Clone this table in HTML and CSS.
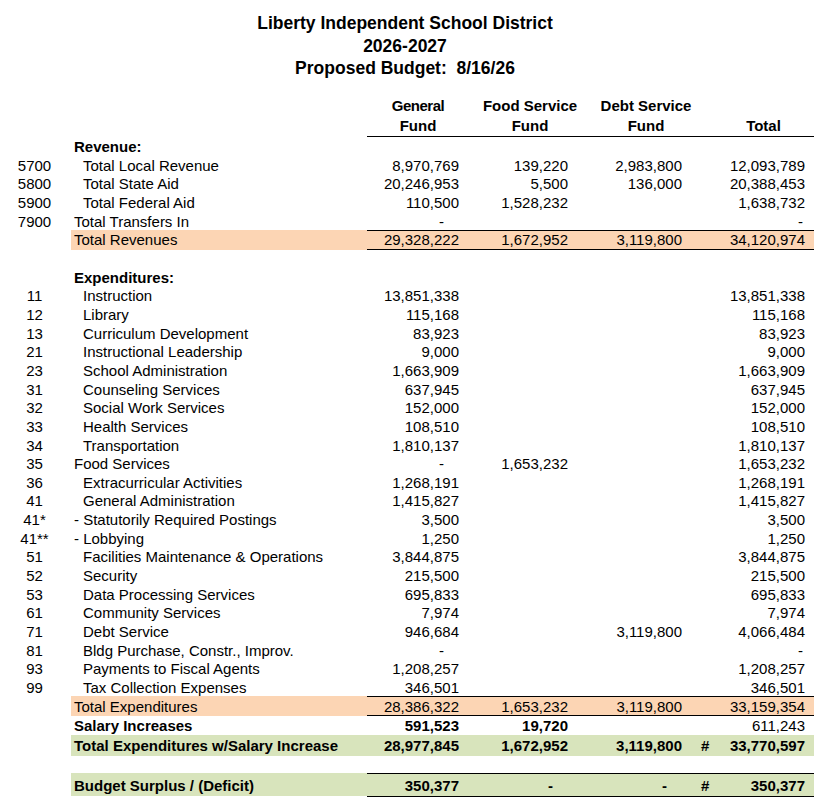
FILE: index.html
```html
<!DOCTYPE html>
<html lang="en">
<head>
<meta charset="utf-8">
<title>Liberty ISD Proposed Budget</title>
<link rel="stylesheet" href="styles.css">
</head>
<body>
<div class="page">
  <div class="title">
    <div>Liberty Independent School District</div>
    <div>2026-2027</div>
    <div>Proposed Budget:&nbsp; 8/16/26</div>
  </div>

  <div class="head">
    <div></div>
    <div></div>
    <div class="hc hc-gen"><span class="tight">General</span><span>Fund</span></div>
    <div class="hc hc-food"><span>Food Service</span><span>Fund</span></div>
    <div class="hc hc-debt"><span>Debt Service</span><span>Fund</span></div>
    <div class="hc"></div>
    <div class="hc hc-tot"><span>&nbsp;</span><span>Total</span></div>
  </div>

  <div class="row"><div class="code"></div><div class="lbl b">Revenue:</div><div></div><div></div><div></div><div></div><div></div></div>
  <div class="row"><div class="code">5700</div><div class="lbl ind">Total Local Revenue</div><div class="n">8,970,769</div><div class="n">139,220</div><div class="n">2,983,800</div><div class="h"></div><div class="t">12,093,789</div></div>
  <div class="row"><div class="code">5800</div><div class="lbl ind">Total State Aid</div><div class="n">20,246,953</div><div class="n">5,500</div><div class="n">136,000</div><div class="h"></div><div class="t">20,388,453</div></div>
  <div class="row"><div class="code">5900</div><div class="lbl ind">Total Federal Aid</div><div class="n">110,500</div><div class="n">1,528,232</div><div class="n"></div><div class="h"></div><div class="t">1,638,732</div></div>
  <div class="row"><div class="code">7900</div><div class="lbl">Total Transfers In</div><div class="n dash">-</div><div class="n"></div><div class="n"></div><div class="h"></div><div class="t dash">-</div></div>
  <div class="row tot peach"><div class="code"></div><div class="lbl">Total Revenues</div><div class="n">29,328,222</div><div class="n">1,672,952</div><div class="n">3,119,800</div><div class="h"></div><div class="t">34,120,974</div></div>
  <div class="row"><div class="code"></div><div class="lbl"></div><div></div><div></div><div></div><div></div><div></div></div>

  <div class="row"><div class="code"></div><div class="lbl b">Expenditures:</div><div></div><div></div><div></div><div></div><div></div></div>
  <div class="row"><div class="code">11</div><div class="lbl ind">Instruction</div><div class="n">13,851,338</div><div class="n"></div><div class="n"></div><div class="h"></div><div class="t">13,851,338</div></div>
  <div class="row"><div class="code">12</div><div class="lbl ind">Library</div><div class="n">115,168</div><div class="n"></div><div class="n"></div><div class="h"></div><div class="t">115,168</div></div>
  <div class="row"><div class="code">13</div><div class="lbl ind">Curriculum Development</div><div class="n">83,923</div><div class="n"></div><div class="n"></div><div class="h"></div><div class="t">83,923</div></div>
  <div class="row"><div class="code">21</div><div class="lbl ind">Instructional Leadership</div><div class="n">9,000</div><div class="n"></div><div class="n"></div><div class="h"></div><div class="t">9,000</div></div>
  <div class="row"><div class="code">23</div><div class="lbl ind">School Administration</div><div class="n">1,663,909</div><div class="n"></div><div class="n"></div><div class="h"></div><div class="t">1,663,909</div></div>
  <div class="row"><div class="code">31</div><div class="lbl ind">Counseling Services</div><div class="n">637,945</div><div class="n"></div><div class="n"></div><div class="h"></div><div class="t">637,945</div></div>
  <div class="row"><div class="code">32</div><div class="lbl ind">Social Work Services</div><div class="n">152,000</div><div class="n"></div><div class="n"></div><div class="h"></div><div class="t">152,000</div></div>
  <div class="row"><div class="code">33</div><div class="lbl ind">Health Services</div><div class="n">108,510</div><div class="n"></div><div class="n"></div><div class="h"></div><div class="t">108,510</div></div>
  <div class="row"><div class="code">34</div><div class="lbl ind">Transportation</div><div class="n">1,810,137</div><div class="n"></div><div class="n"></div><div class="h"></div><div class="t">1,810,137</div></div>
  <div class="row"><div class="code">35</div><div class="lbl">Food Services</div><div class="n dash">-</div><div class="n">1,653,232</div><div class="n"></div><div class="h"></div><div class="t">1,653,232</div></div>
  <div class="row"><div class="code">36</div><div class="lbl ind">Extracurricular Activities</div><div class="n">1,268,191</div><div class="n"></div><div class="n"></div><div class="h"></div><div class="t">1,268,191</div></div>
  <div class="row"><div class="code">41</div><div class="lbl ind">General Administration</div><div class="n">1,415,827</div><div class="n"></div><div class="n"></div><div class="h"></div><div class="t">1,415,827</div></div>
  <div class="row"><div class="code">41*</div><div class="lbl sub">- Statutorily Required Postings</div><div class="n">3,500</div><div class="n"></div><div class="n"></div><div class="h"></div><div class="t">3,500</div></div>
  <div class="row"><div class="code">41**</div><div class="lbl sub">- Lobbying</div><div class="n">1,250</div><div class="n"></div><div class="n"></div><div class="h"></div><div class="t">1,250</div></div>
  <div class="row"><div class="code">51</div><div class="lbl ind">Facilities Maintenance &amp; Operations</div><div class="n">3,844,875</div><div class="n"></div><div class="n"></div><div class="h"></div><div class="t">3,844,875</div></div>
  <div class="row"><div class="code">52</div><div class="lbl ind">Security</div><div class="n">215,500</div><div class="n"></div><div class="n"></div><div class="h"></div><div class="t">215,500</div></div>
  <div class="row"><div class="code">53</div><div class="lbl ind">Data Processing Services</div><div class="n">695,833</div><div class="n"></div><div class="n"></div><div class="h"></div><div class="t">695,833</div></div>
  <div class="row"><div class="code">61</div><div class="lbl ind">Community Services</div><div class="n">7,974</div><div class="n"></div><div class="n"></div><div class="h"></div><div class="t">7,974</div></div>
  <div class="row"><div class="code">71</div><div class="lbl ind">Debt Service</div><div class="n">946,684</div><div class="n"></div><div class="n">3,119,800</div><div class="h"></div><div class="t">4,066,484</div></div>
  <div class="row"><div class="code">81</div><div class="lbl ind">Bldg Purchase, Constr., Improv.</div><div class="n dash">-</div><div class="n"></div><div class="n"></div><div class="h"></div><div class="t dash">-</div></div>
  <div class="row"><div class="code">93</div><div class="lbl ind">Payments to Fiscal Agents</div><div class="n">1,208,257</div><div class="n"></div><div class="n"></div><div class="h"></div><div class="t">1,208,257</div></div>
  <div class="row"><div class="code">99</div><div class="lbl ind">Tax Collection Expenses</div><div class="n">346,501</div><div class="n"></div><div class="n"></div><div class="h"></div><div class="t">346,501</div></div>
  <div class="row tot peach"><div class="code"></div><div class="lbl">Total Expenditures</div><div class="n">28,386,322</div><div class="n">1,653,232</div><div class="n">3,119,800</div><div class="h"></div><div class="t">33,159,354</div></div>
  <div class="row sal"><div class="code"></div><div class="lbl b">Salary Increases</div><div class="n b">591,523</div><div class="n b">19,720</div><div class="n"></div><div class="h"></div><div class="t">611,243</div></div>
  <div class="row green b tes"><div class="code"></div><div class="lbl">Total Expenditures w/Salary Increase</div><div class="n">28,977,845</div><div class="n">1,672,952</div><div class="n">3,119,800</div><div class="h">#</div><div class="t">33,770,597</div></div>
  <div class="row gap"><div class="code"></div><div class="lbl"></div><div></div><div></div><div></div><div></div><div></div></div>
  <div class="row green b surplus"><div class="code"></div><div class="lbl">Budget Surplus / (Deficit)</div><div class="n">350,377</div><div class="n dash">-</div><div class="n dash">-</div><div class="h">#</div><div class="t">350,377</div></div>
</div>
</body>
</html>
```

FILE: styles.css
```css
* { box-sizing: border-box; }

html, body {
  margin: 0;
  padding: 0;
  background: #ffffff;
}

body {
  font-family: "Liberation Sans", Arial, sans-serif;
  font-size: 15px;
  color: #000000;
}

.page {
  width: 826px;
}

.title {
  width: 810px;
  padding-top: 12px;
  text-align: center;
  font-weight: bold;
  font-size: 17.5px;
  line-height: 22.5px;
  white-space: nowrap;
}

.head {
  display: grid;
  grid-template-columns: 71px 296px 95px 109px 114px 33px 96px;
  margin-top: 15px;
  font-weight: bold;
  line-height: 20px;
  white-space: nowrap;
}

.hc {
  display: flex;
  flex-direction: column;
  align-items: center;
  padding-top: 1px;
  border-bottom: 1px solid #000000;
}

.tight { letter-spacing: -0.5px; }

.hc-gen { padding-left: 7px; }
.hc-food { padding-left: 27px; }
.hc-debt { padding-left: 36px; }
.hc-tot { padding-right: 5px; }

.row {
  display: grid;
  grid-template-columns: 71px 296px 95px 109px 114px 33px 96px;
  height: 18.67px;
  line-height: 18.67px;
  white-space: nowrap;
}

.row > * {
  padding-top: 1.5px;
}

.code {
  text-align: center;
  padding-right: 2px;
}

.lbl { padding-left: 3px; }
.lbl.ind { padding-left: 12px; }
.lbl.sub { padding-left: 3px; }

.b { font-weight: bold; }

.n {
  text-align: right;
  padding-right: 3px;
}

.t {
  text-align: right;
  padding-right: 9px;
}

.h {
  padding-left: 16px;
}

.n.dash { padding-right: 18px; }
.t.dash { padding-right: 11px; }

.peach > :not(.code) { background: #fcd5b4; }
.green > :not(.code) { background: #d8e4bc; }

.tot > .n,
.tot > .h,
.tot > .t {
  box-shadow: inset 0 1px 0 #000000, inset 0 -1px 0 #000000;
}

.sal {
  height: 20px;
  line-height: 20px;
}

.tes {
  height: 19.5px;
  line-height: 19.5px;
}

.gap {
  height: 19px;
}

.surplus {
  height: 24px;
  line-height: 21px;
}

.surplus > * {
  border-bottom: 3px solid transparent;
  background-clip: padding-box !important;
}

.surplus > .n,
.surplus > .h,
.surplus > .t {
  border-bottom: 3px double #000000;
  box-shadow: inset 0 1px 0 #000000;
}
```
